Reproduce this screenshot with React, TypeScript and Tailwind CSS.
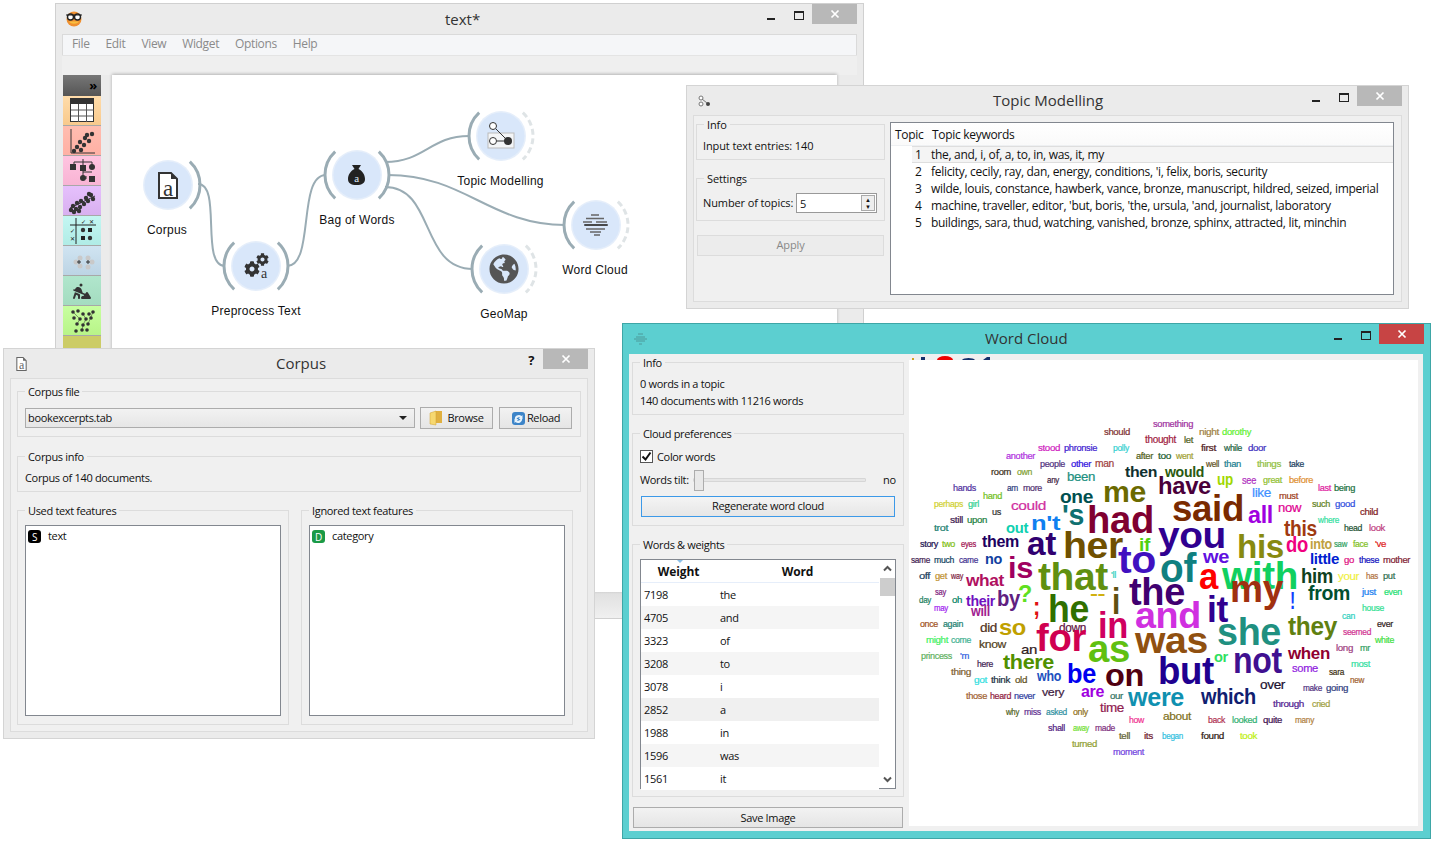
import React from "react";
import { FaCog, FaGlobeAmericas } from "react-icons/fa";
import { FaPersonDigging } from "react-icons/fa6";

type W = [string, number, number, number, number, string];
const words: W[] = [
  ["something",1153,1193,427,9,"#a030a0"],["should",1104,1130,435,9,"#803030"],["night",1199,1219,435,9,"#a08040"],["dorothy",1222,1251,435,9,"#60f030"],
  ["thought",1145,1176,443,10,"#a02040"],["let",1184,1193,443,9,"#506020"],["stood",1038,1060,451,9,"#d020c0"],["phronsie",1064,1097,451,9,"#4020d0"],["polly",1113,1129,451,9,"#30d0d0"],
  ["first",1201,1216,451,9,"#502020"],["while",1224,1242,451,9,"#206040"],["door",1248,1266,451,9,"#4030c0"],["after",1136,1153,459,9,"#506020"],["too",1158,1171,459,9,"#206030"],["went",1176,1193,459,9,"#a0a030"],
  ["another",1006,1035,459,9,"#b030e0"],["people",1040,1065,467,9,"#503080"],["other",1071,1091,467,9,"#3010e0"],["man",1095,1114,467,10,"#a04040"],["well",1206,1219,467,9,"#605020"],["than",1224,1241,467,9,"#208090"],["things",1257,1281,467,9,"#90c040"],["take",1289,1304,467,9,"#204060"],
  ["room",991,1011,475,9,"#403020"],["own",1017,1032,475,9,"#80a030"],["then",1125,1157,477,15,"#103030"],["would",1165,1204,477,14,"#2a5a10"],["any",1047,1059,483,9,"#402040"],["been",1067,1095,481,12,"#209080"],
  ["up",1217,1233,485,16,"#a0d800"],["see",1242,1256,484,10,"#b030c0"],["great",1263,1282,483,9,"#90c030"],["before",1289,1313,483,9,"#e09030"],["hands",953,976,491,9,"#5030a0"],["am",1007,1018,491,9,"#304080"],["more",1023,1042,491,9,"#503070"],["last",1318,1331,491,9,"#e020a0"],["being",1334,1355,491,9,"#207040"],
  ["hand",983,1002,499,9,"#70c020"],["have",1158,1211,494,24,"#4a003a"],["me",1103,1146,502,29,"#6b6a00"],["like",1252,1271,497,13,"#4090ff"],["must",1279,1298,499,9,"#a04020"],["one",1060,1093,503,19,"#005050"],
  ["such",1312,1330,507,9,"#608020"],["good",1335,1355,507,9,"#3050e0"],["perhaps",934,963,507,9,"#d0d030"],["girl",968,979,507,9,"#30d090"],["could",1011,1046,510,13,"#d030a0"],["now",1278,1301,512,12,"#e00090"],["child",1360,1378,515,9,"#802020"],["us",992,1001,515,9,"#303030"],
  ["said",1172,1244,521,36,"#7a2a00"],["all",1248,1273,523,24,"#a000e0"],["where",1318,1339,523,9,"#30e0a0"],["still",950,963,523,9,"#402050"],["upon",967,987,523,9,"#208040"],["'s",1062,1084,525,30,"#107070"],["n't",1031,1060,530,21,"#1080f0"],
  ["head",1344,1362,531,9,"#205030"],["look",1369,1385,531,9,"#c04080"],["trot",934,948,531,9,"#208070"],["had",1087,1154,533,38,"#800030"],["out",1006,1028,533,14,"#10d0b0"],["this",1284,1317,536,22,"#a03a10"],
  ["story",920,938,547,9,"#201050"],["two",942,955,547,9,"#80c010"],["eyes",961,976,547,9,"#a01050"],["them",982,1019,547,16,"#200060"],["saw",1334,1347,547,9,"#30a060"],["face",1353,1368,547,9,"#80c020"],["'ve",1375,1386,547,9,"#e02020"],
  ["you",1158,1226,548,37,"#300090"],["into",1310,1332,549,14,"#c0a040"],["if",1139,1150,551,18,"#50d010"],["do",1286,1308,552,22,"#f00080"],["at",1027,1056,555,34,"#300070"],["her",1063,1123,558,36,"#705000"],["his",1237,1284,558,34,"#888a10"],
  ["we",1203,1229,563,19,"#6010e0"],["little",1310,1339,564,15,"#0020d0"],["go",1344,1354,563,9,"#e01080"],["these",1359,1379,563,9,"#1010c0"],["mother",1383,1410,563,9,"#802030"],["same",911,930,563,9,"#402050"],["much",934,954,563,9,"#104060"],["came",959,978,563,9,"#403090"],["no",985,1002,564,15,"#1040a0"],
  ["to",1118,1156,573,38,"#4010c0"],["is",1008,1033,578,30,"#a00060"],["'ll",1111,1116,578,9,"#30d0c0"],["off",919,930,579,9,"#204060"],["get",935,947,579,9,"#c09030"],["way",951,963,579,9,"#802040"],["has",1366,1378,579,9,"#b07040"],["put",1383,1395,579,9,"#307050"],["your",1338,1359,580,11,"#f0f040"],
  ["of",1160,1196,582,40,"#108080"],["him",1301,1333,583,20,"#104020"],["what",966,1004,586,16,"#b01060"],["a",1199,1218,589,37,"#ff0000"],["with",1222,1298,589,38,"#10d060"],["that",1038,1108,590,38,"#609010"],
  ["say",935,946,595,9,"#802080"],["just",1362,1376,595,9,"#2080f0"],["even",1384,1402,595,9,"#20e070"],["from",1308,1350,600,20,"#005030"],["--",1090,1105,599,16,"#d0b010"],["?",1018,1032,602,24,"#60e020"],["my",1230,1283,602,38,"#a03010"],["day",919,931,603,9,"#208060"],["oh",952,962,603,9,"#008060"],
  ["the",1129,1185,605,38,"#400070"],["their",966,995,606,14,"#7010c0"],["by",997,1020,606,22,"#602080"],["!",1290,1295,609,24,"#1040ff"],["house",1362,1384,611,9,"#30e090"],["may",934,948,611,9,"#a020f0"],["i",1112,1120,614,36,"#605010"],[";",1033,1040,615,26,"#e01010"],["will",971,990,616,14,"#a02090"],
  ["can",1342,1355,619,9,"#30d0c0"],["he",1048,1089,622,38,"#307000"],["it",1207,1228,622,36,"#300090"],["once",920,938,627,9,"#a05020"],["again",943,963,627,9,"#208070"],["ever",1377,1393,627,9,"#302020"],["and",1135,1201,628,37,"#d030e0"],["did",980,997,632,12,"#503020"],["down",1059,1086,632,12,"#601040"],
  ["so",999,1026,635,22,"#c0a000"],["seemed",1343,1371,635,9,"#d03090"],["they",1288,1337,635,26,"#608010"],["in",1098,1128,638,36,"#d00060"],["might",926,948,643,9,"#40f060"],["come",951,971,643,9,"#40b090"],["white",1375,1394,643,9,"#40e040"],["she",1217,1281,645,38,"#209080"],
  ["know",979,1006,648,11,"#504020"],["for",1036,1086,651,38,"#d00050"],["long",1336,1353,651,9,"#a04080"],["mr",1360,1370,651,9,"#30a060"],["was",1135,1208,653,37,"#905010"],["an",1021,1037,654,13,"#302020"],["when",1288,1330,659,17,"#900030"],["princess",921,952,659,9,"#60b060"],["'m",960,969,659,9,"#3060e0"],
  ["as",1088,1130,662,38,"#60c010"],["or",1214,1228,662,15,"#30e060"],["here",977,993,667,9,"#402050"],["most",1351,1370,667,9,"#30e0a0"],["there",1003,1054,669,20,"#509000"],["some",1292,1318,672,11,"#9020e0"],["not",1233,1282,673,36,"#401090"],["thing",951,971,675,9,"#806030"],["sara",1329,1344,675,9,"#403010"],
  ["who",1037,1061,681,14,"#2050c0"],["got",974,987,683,9,"#30e0e0"],["think",991,1010,683,9,"#203040"],["old",1015,1027,683,9,"#605020"],["new",1350,1364,683,9,"#a06030"],["be",1067,1096,683,28,"#0000f0"],["but",1158,1214,684,38,"#200090"],["on",1105,1144,686,32,"#500010"],
  ["over",1260,1285,689,12,"#201030"],["make",1303,1322,691,9,"#503080"],["going",1326,1348,691,9,"#304080"],["very",1042,1064,696,11,"#402040"],["are",1081,1104,697,16,"#a000e0"],["those",966,987,699,9,"#a06030"],["heard",990,1011,699,9,"#902040"],["never",1014,1035,699,9,"#3040a0"],["our",1110,1123,699,9,"#307060"],
  ["which",1201,1256,704,22,"#102070"],["were",1128,1184,706,26,"#1090b0"],["through",1273,1304,707,9,"#502090"],["cried",1312,1330,707,9,"#a0a040"],["time",1100,1124,712,12,"#902050"],["why",1006,1019,715,9,"#506020"],["miss",1024,1041,715,9,"#603090"],["asked",1046,1067,715,9,"#3090a0"],["only",1073,1088,715,9,"#907020"],
  ["about",1163,1191,720,11,"#807020"],["back",1208,1225,723,9,"#b03050"],["looked",1232,1257,723,9,"#30b070"],["quite",1263,1282,723,9,"#401050"],["many",1295,1314,723,9,"#b08040"],["how",1129,1144,723,9,"#f03090"],["shall",1048,1065,731,9,"#502080"],["away",1073,1089,731,9,"#70e030"],["made",1095,1115,731,9,"#803080"],
  ["tell",1119,1130,739,9,"#606030"],["its",1144,1153,739,9,"#702030"],["began",1162,1183,739,9,"#30c0e0"],["found",1201,1224,739,9,"#302010"],["took",1240,1257,739,9,"#c0f010"],["turned",1072,1097,747,9,"#90a030"],["moment",1113,1144,755,9,"#7040e0"],
];

const ui = "font-['Open_Sans','Noto_Sans',sans-serif] text-[11px] tracking-[-0.03em] text-[#111]";
const title = "font-['Open_Sans',sans-serif] text-[15px] leading-[20px] tracking-normal text-[#333]";

function Group({ title, className, children }: { title: string; className: string; children?: React.ReactNode }) {
  return (
    <div className={`relative border border-[#dcdcdc] ${className}`}>
      <span className="absolute top-[-8px] left-[7px] bg-[#f0f0f0] px-[3px] leading-[16px]">{title}</span>
      {children}
    </div>
  );
}

function Controls({ close, max = true }: { close: string; max?: boolean }) {
  return (
    <div className="flex items-start">
      {max && (
        <>
          <div className="mt-[14px] mr-[19px] h-[2px] w-[8px] bg-[#222]" />
          <div className="mt-[7px] mr-[8px] h-[9px] w-[10px] border border-t-2 border-[#222]" />
        </>
      )}
      <div className={`flex h-[20px] w-[45px] items-center justify-center ${close}`}>
        <svg width="10" height="10" viewBox="0 0 10 10"><path d="M1.5 1.5l7 7M8.5 1.5l-7 7" stroke="#fff" strokeWidth="1.7" /></svg>
      </div>
    </div>
  );
}

function Btn({ children, className }: { children: React.ReactNode; className: string }) {
  return <div className={`flex items-center justify-center border border-[#acacac] bg-gradient-to-b from-[#f2f2f2] to-[#e5e5e5] ${className}`}>{children}</div>;
}

function Arc({ cx, cy, r = 32, a = 0, span = 47, dashed, color = "#9aacb4" }: { cx: number; cy: number; r?: number; a?: number; span?: number; dashed?: boolean; color?: string }) {
  const p = (d: number) => [cx + r * Math.cos((d * Math.PI) / 180), cy + r * Math.sin((d * Math.PI) / 180)];
  const [x0, y0] = p(a - span);
  const [x1, y1] = p(a + span);
  return <path d={`M${x0} ${y0}A${r} ${r} 0 0 1 ${x1} ${y1}`} fill="none" stroke={dashed ? "#dfe4e6" : color} strokeWidth={3} strokeDasharray={dashed ? "6 3.5" : undefined} />;
}

function Node({ cx, cy, label, lx, ly, left, right, rightDashed, children }: { cx: number; cy: number; label: string; lx: number; ly: number; left?: boolean; right?: boolean; rightDashed?: boolean; children?: React.ReactNode }) {
  return (
    <g>
      <circle cx={cx} cy={cy} r={25} fill="#cfe0f6" opacity={0.55} />
      <circle cx={cx} cy={cy} r={23.5} fill="#d9e7fa" />
      {left && <Arc cx={cx} cy={cy} a={180} />}
      {right && <Arc cx={cx} cy={cy} a={0} />}
      {rightDashed && <Arc cx={cx} cy={cy} a={0} dashed />}
      {children}
      <text x={lx} y={ly} textAnchor="middle" fontSize={12} fill="#111" letterSpacing="0.25" fontFamily="'Liberation Sans',sans-serif">{label}</text>
    </g>
  );
}

function DocIcon({ x, y, s = 1, dim }: { x: number; y: number; s?: number; dim?: boolean }) {
  const c = dim ? "#666" : "#333";
  return (
    <g transform={`translate(${x} ${y}) scale(${s})`}>
      <path d="M1 1H13L19 7V26H1Z" fill="#fff" stroke={c} strokeWidth="2" />
      <path d="M13 1V7H19Z" fill={c} />
      <text x="10" y="24" textAnchor="middle" fontSize="23" fontFamily="'Liberation Serif',serif" fill={c}>a</text>
    </g>
  );
}

function NodeCanvas() {
  return (
    <div className="relative h-[517px] flex-1 bg-white shadow-[0_-1px_3px_rgba(0,0,0,0.25)]">
      <svg className="block" width="725" height="517" viewBox="112 75 725 517">
        <g fill="none" stroke="#9aacb4" strokeWidth="2">
          <path d="M198 184C222 184 200 266 225 266" />
          <path d="M287 266C315 266 297 175 326 175" />
          <path d="M385 162C425 162 430 136 469 136" />
          <path d="M388 175C465 175 490 225 565 225" />
          <path d="M385 187C435 187 420 269 473 269" />
        </g>
        <Node cx={168} cy={185} label="Corpus" lx={167} ly={234} right>
          <DocIcon x={158} y={172} />
        </Node>
        <Node cx={256} cy={266} label="Preprocess Text" lx={256} ly={315} left right>
          <FaCog x={244} y={261} size={16} color="#333" />
          <FaCog x={256} y={253} size={13} color="#333" />
          <text x={264} y={278} textAnchor="middle" fontSize={14} fontFamily="'Liberation Serif',serif" fill="#333">a</text>
        </Node>
        <Node cx={357} cy={175} label="Bag of Words" lx={357} ly={224} left right>
          <path d="M352 165h9l-2.5 4c4 2 6.500 6 6.500 10 0 4-3 6-8.500 6s-8.500-2-8.500-6c0-4 2.500-8 6.500-10z" fill="#222" />
          <text x={356.500} y={182} textAnchor="middle" fontSize={11} fontFamily="'Liberation Serif',serif" fill="#dfe9f8">a</text>
        </Node>
        <Node cx={501} cy={136} label="Topic Modelling" lx={500.500} ly={185} left rightDashed>
          <rect x={488} y={133} width={26} height={15} fill="#f3f5f7" stroke="#bbb" />
          <circle cx={493} cy={126} r={3.500} fill="#fff" stroke="#333" />
          <circle cx={493} cy={141} r={3.500} fill="#fff" stroke="#333" />
          <circle cx={508} cy={141} r={4} fill="#333" />
          <path d="M496 129l10 10M497 141h8" stroke="#333" />
        </Node>
        <Node cx={504} cy={269} label="GeoMap" lx={504} ly={318} left rightDashed>
          <FaGlobeAmericas x={489} y={254} size={30} color="#555" />
        </Node>
        <Node cx={596} cy={225} label="Word Cloud" lx={595} ly={274} left rightDashed>
          <path d="M591 215h8M586 218.500h18M583 222h9M596 222h11M585 225h22M586 229h19M590 232h11M594 235h6" stroke="#666" strokeWidth="1.400" />
          <path d="M584 225h24" stroke="#222" strokeWidth="1.200" />
        </Node>
      </svg>
    </div>
  );
}

const Dot = ({ x, y, r = 2.2 }: { x: number; y: number; r?: number }) => <circle cx={x} cy={y} r={r} fill="#333" />;

function Dock() {
  const rows: [string, React.ReactNode][] = [
    ["from-[#ffdcaa] to-[#f8c98c]", <g><rect x="7.500" y="2.500" width="23" height="23" fill="#fff" stroke="#333" /><rect x="8" y="3" width="23" height="5" fill="#333" /><path d="M8 14h23M8 20h23M15.500 8v18M23.500 8v18" stroke="#555" /></g>],
    ["from-[#ffbdb0] to-[#ffb0a4]", <g><path d="M8 3v24h24" fill="none" stroke="#333" /><Dot x={11} y={25} /><Dot x={14} y={21} /><Dot x={18} y={24} /><Dot x={17} y={16} /><Dot x={21} y={19} /><Dot x={22} y={12} /><Dot x={26} y={15} /><Dot x={29} y={8} /><Dot x={24} y={9} /></g>],
    ["from-[#ffc4e0] to-[#f8b4d4]", <g fill="#333"><path d="M11 9V6h18v3M20 3v17M20 16h9M23 20v3" stroke="#333" fill="none" /><rect x="7" y="8" width="6" height="6" /><rect x="17" y="9" width="6" height="6" /><circle cx="29" cy="11" r="3" /><circle cx="20" cy="22" r="3" /><rect x="26" y="20" width="6" height="6" /></g>],
    ["from-[#e6c0fc] to-[#d8b0f0]", <g>{[[8,24],[10,20],[13,23],[14,17],[17,21],[18,15],[21,18],[23,12],[25,15],[28,9],[30,13],[26,8],[11,26],[16,25]].map(([x, y], i) => <Dot key={i} x={x} y={y} />)}<path d="M7 22L32 10" stroke="#333" /></g>],
    ["from-[#c4f6f2] to-[#b0ece6]", <g><path d="M7 9h26M13 2v26" stroke="#222" /><text x="18" y="8" fontSize="6" fill="#222">✓</text><text x="26" y="8" fontSize="6" fill="#222">✕</text><text x="7" y="17" fontSize="6" fill="#222">✓</text><text x="7" y="25" fontSize="6" fill="#222">✕</text><Dot x={20} y={14} /><rect x="25" y="12" width="4" height="4" fill="#222" /><rect x="18" y="20" width="4" height="4" fill="#222" /><Dot x={27} y={22} /></g>],
    ["from-[#d0e4f2] to-[#bcd4e4]", <g fill="#c9c9c9"><circle cx="17" cy="12" r="2.500" /><circle cx="13" cy="16" r="2.500" /><circle cx="17" cy="20" r="2.500" /><circle cx="25" cy="12" r="2.500" /><circle cx="29" cy="16" r="2.500" /><circle cx="25" cy="21" r="2.500" /><path d="M14 16h4M16 14v4M23 16h4M25 14v4" stroke="#333" /></g>],
    ["from-[#b0e6cc] to-[#a4dcc0]", <FaPersonDigging x={10} y={6} size={18} color="#333" />],
    ["from-[#c8ffa0] to-[#b8f488]", <g>{[[10,6],[15,5],[20,8],[26,8],[30,6],[11,12],[17,13],[23,13],[28,12],[14,18],[20,19],[25,18],[13,25],[19,24],[24,24]].map(([x, y], i) => <Dot key={i} x={x} y={y} r={1.800} />)}<path d="M10 6L17 13L14 18M20 8L23 13L20 19L19 24M30 6L25 18" stroke="#333" strokeWidth=".5" fill="none" /></g>],
  ];
  return (
    <div className="flex w-[38px] flex-col">
      <div className="flex h-[21px] items-center justify-end bg-gradient-to-b from-[#777] to-[#555] pr-[4px] text-[13px] font-bold leading-none text-black">»</div>
      {rows.map(([c, icon], i) => (
        <div key={i} className={`h-[30px] border-b border-[#a8a8a8] bg-gradient-to-b ${c}`}>
          <svg width="38" height="29" viewBox="0 0 38 29">{icon}</svg>
        </div>
      ))}
      <div className="h-[14px] bg-[#cccc66]" />
    </div>
  );
}

function MainWindow() {
  return (
    <div className={`absolute left-[55px] top-[3px] flex h-[616px] w-[809px] flex-col border border-[#d0d0d0] bg-[#ebebeb] ${ui}`}>
      <div className="relative flex h-[30px] shrink-0 items-start justify-end pr-[6px]">
        <svg className="absolute left-[9px] top-[6px]" width="18" height="18" viewBox="0 0 18 18">
          <circle cx="9" cy="9" r="7.500" fill="#f09030" />
          <path d="M4 11.500c2 3 8 3 10 0" fill="#f8c040" />
          <circle cx="5.500" cy="7" r="3" fill="#fff" stroke="#222" strokeWidth="1.400" />
          <circle cx="12.500" cy="7" r="3" fill="#fff" stroke="#222" strokeWidth="1.400" />
          <path d="M1 5h16" stroke="#222" />
        </svg>
        <span className={`absolute left-[389px] top-[5px] ${title}`}>text*</span>
        <Controls close="bg-[#b8b8b8]" />
      </div>
      <div className="mx-[6px] flex h-[21px] shrink-0 items-center gap-[16px] border border-b-0 border-[#dadada] bg-[#f5f6f8] pl-[9px] text-[12px] tracking-[-0.03em] text-[#8a8a8a]">
        {["File", "Edit", "View", "Widget", "Options", "Help"].map((m) => <span key={m} className="-translate-y-px">{m}</span>)}
      </div>
      <div className="mx-[6px] h-[20px] shrink-0 border-t border-[#e4e4e4] bg-[#efefef]" />
      <div className="mx-[7px] flex flex-1 flex-col">
        <div className="flex gap-[11px] pr-[19px]">
          <Dock />
          <NodeCanvas />
        </div>
        <div className="flex-1 bg-gradient-to-b from-[#e0e0e0] to-[#f0f0f0]" />
      </div>
    </div>
  );
}

function TopicWindow() {
  const rows = ["the, and, i, of, a, to, in, was, it, my", "felicity, cecily, ray, dan, energy, conditions, 'i, felix, boris, security", "wilde, louis, constance, hawberk, vance, bronze, manuscript, hildred, seized, imperial", "machine, traveller, editor, 'but, boris, 'the, ursula, 'and, journalist, laboratory", "buildings, sara, thud, watching, vanished, bronze, sphinx, attracted, lit, minchin"];
  return (
    <div className={`absolute left-[686px] top-[85px] flex h-[224px] w-[723px] flex-col border border-[#d4d4d4] bg-[#ebebeb] ${ui}`}>
      <div className="relative flex h-[29px] shrink-0 items-start justify-end pr-[6px]">
        <svg className="absolute left-[11px] top-[9px]" width="13" height="13" viewBox="0 0 13 13"><circle cx="3" cy="3" r="2" fill="#fff" stroke="#777" /><circle cx="3" cy="9" r="2" fill="#fff" stroke="#777" /><circle cx="10" cy="9" r="2" fill="#444" /><path d="M4 4l5 4" stroke="#777" /></svg>
        <span className={`absolute left-[306px] top-[4px] ${title}`}>Topic Modelling</span>
        <Controls close="bg-[#b8b8b8]" />
      </div>
      <div className="mx-[6px] flex h-[187px] gap-[5px] border border-[#dcdcdc] bg-[#f0f0f0] pl-[2px]">
        <div className="flex w-[189px] flex-col tracking-[-0.01em]">
          <Group title="Info" className="mt-[8px] h-[36px] pl-[6px] pt-[12px]"><div className="leading-[17px]">Input text entries: 140</div></Group>
          <Group title="Settings" className="mt-[18px] h-[43px] pl-[6px] pt-[14px]">
            <div className="flex items-center gap-[8px] leading-[17px]">
              <span className="w-[85px] -translate-y-px whitespace-nowrap">Number of topics:</span>
              <div className="flex h-[20px] w-[81px] items-center justify-between border border-[#999] bg-white pl-[3px] pr-[1px]">
                <span>5</span>
                <div className="flex h-[16px] w-[14px] flex-col items-center justify-around border border-[#aaa] bg-[#eee] text-[6px] leading-none">
                  <span>▲</span><span>▼</span>
                </div>
              </div>
            </div>
          </Group>
          <div className="ml-[1px] mt-[14px] flex h-[21px] w-[187px] items-center justify-center border border-[#dcdcdc] bg-[#ececec] text-[#888]">Apply</div>
        </div>
        <div className="mr-[7px] mt-[6px] h-[173px] flex-1 border border-[#82878f] bg-white text-[12px] tracking-[-0.025em]">
          <div className="flex h-[23px] items-center border-b border-[#eef0f2] bg-gradient-to-b from-white to-[#fafafa] pt-[2px]">
            <span className="w-[41px] pl-[4px]">Topic</span>
            <span>Topic keywords</span>
          </div>
          {rows.map((r, i) => (
            <div key={i} className="flex h-[17px] items-center leading-[17px]">
              <span className="w-[21px] shrink-0" />
              <span className={`flex h-[17px] flex-1 items-center ${i === 0 ? "border-y border-[#dedede] bg-[#f4f4f4]" : ""}`}>
                <span className="w-[19px] shrink-0 pl-[3px]">{i + 1}</span>
                <span>{r}</span>
              </span>
            </div>
          ))}
        </div>
      </div>
    </div>
  );
}

function ListBox({ icon, tone, text }: { icon: string; tone: string; text: string }) {
  return (
    <div className="mx-[7px] mt-[14px] h-[191px] border border-[#82878f] bg-white p-[2px]">
      <div className="flex items-center gap-[5px] leading-[17px]">
        <span className={`flex h-[13px] w-[13px] items-center justify-center rounded-[3px] text-[10px] leading-none text-white ${tone}`}>{icon}</span>
        <span className="pl-[2px] -translate-y-px">{text}</span>
      </div>
    </div>
  );
}

function CorpusWindow() {
  return (
    <div className={`absolute left-[3px] top-[348px] flex h-[391px] w-[592px] flex-col border border-[#d4d4d4] bg-[#ebebeb] ${ui}`}>
      <div className="relative flex h-[29px] shrink-0 items-start justify-end pr-[6px]">
        <svg className="absolute left-[12px] top-[8px]" width="11" height="14" viewBox="0 0 20 27"><DocIcon x={0} y={0} dim /></svg>
        <span className={`absolute left-[272px] top-[4px] ${title}`}>Corpus</span>
        <span className="mr-[9px] mt-[1px] text-[13px] font-bold leading-[20px]">?</span>
        <Controls close="bg-[#b8b8b8]" max={false} />
      </div>
      <div className="mx-[6px] h-[354px] border border-[#dcdcdc] bg-[#f0f0f0] px-[6px]">
        <Group title="Corpus file" className="mt-[12px] h-[46px]">
          <div className="flex items-center gap-[5px] pl-[7px] pt-[15px]">
            <div className="flex h-[20px] w-[390px] items-center justify-between border border-[#acacac] bg-gradient-to-b from-[#f2f2f2] to-[#e6e6e6] pl-[2px] pr-[7px]">
              <span>bookexcerpts.tab</span>
              <span className="h-0 w-0 border-x-[4px] border-t-[4px] border-x-transparent border-t-[#222]" />
            </div>
            <Btn className="h-[22px] w-[73px] gap-[4px]">
              <svg width="14" height="16" viewBox="0 0 14 16"><path d="M6 1h7v12H6z" fill="#e0b040" /><path d="M1 3l6-2v14l-6-1z" fill="#f6d870" stroke="#d0a030" strokeWidth=".5" /></svg>
              <span>Browse</span>
            </Btn>
            <Btn className="ml-[1px] h-[22px] w-[73px] gap-[1px]">
              <svg width="15" height="15" viewBox="0 0 15 15"><rect x="1" y="1" width="13" height="13" rx="3" fill="#3c84c8" /><path d="M4 9a4 4 0 0 1 6.500-4l1-1v4h-4l1.500-1.500A2.400 2.400 0 0 0 5.500 9zM11 7a4 4 0 0 1-6.500 4l-1 1V8h4L6 9.500A2.400 2.400 0 0 0 9.500 7z" fill="#e6f2fb" /></svg>
              <span>Reload</span>
            </Btn>
          </div>
        </Group>
        <Group title="Corpus info" className="mt-[19px] h-[36px] pl-[7px] pt-[12px]"><div className="leading-[17px]">Corpus of 140 documents.</div></Group>
        <div className="mt-[18px] flex gap-[12px]">
          <Group title="Used text features" className="h-[215px] w-[272px]"><ListBox icon="S" tone="bg-black" text="text" /></Group>
          <Group title="Ignored text features" className="h-[215px] w-[272px]"><ListBox icon="D" tone="bg-[#1a9a46]" text="category" /></Group>
        </div>
      </div>
    </div>
  );
}

function WordCloudWindow() {
  const data = [["7198", "the"], ["4705", "and"], ["3323", "of"], ["3208", "to"], ["3078", "i"], ["2852", "a"], ["1988", "in"], ["1596", "was"], ["1561", "it"]];
  return (
    <div className={`absolute left-[622px] top-[323px] flex h-[516px] w-[809px] flex-col border border-[#3ea6a6] bg-[#5ccfd0] ${ui}`}>
      <div className="relative flex h-[30px] shrink-0 items-start justify-end pr-[6px]">
        <svg className="absolute left-[11px] top-[9px]" width="13" height="12" viewBox="0 0 13 12"><path d="M4 1h5M2 4h9M0 6h13M2 8h9M5 11h3" stroke="#4d9a9a" /></svg>
        <span className={`absolute left-[362px] top-[4px] ${title}`}>Word Cloud</span>
        <Controls close="bg-[#c74444]" />
      </div>
      <div className="ml-[6px] mr-[7px] flex h-[477px] bg-[#f0f0f0]">
        <div className="flex w-[280px] shrink-0 flex-col pl-[3px] pr-[5px]">
          <Group title="Info" className="mt-[8px] h-[53px] pl-[7px] pt-[12px]">
            <div className="leading-[17px]">0 words in a topic</div>
            <div className="leading-[17px]">140 documents with 11216 words</div>
          </Group>
          <Group title="Cloud preferences" className="mt-[18px] h-[93px] px-[7px] pt-[14px]">
            <div className="flex items-center gap-[4px] leading-[17px]">
              <span className="flex h-[13px] w-[13px] items-center justify-center border border-[#555] bg-white">
                <svg width="11" height="11" viewBox="0 0 11 11"><path d="M1.500 5.500L4.500 8.500L9.500 1.500" fill="none" stroke="#111" strokeWidth="2" /></svg>
              </span>
              <span>Color words</span>
            </div>
            <div className="mt-[4px] flex h-[22px] items-center">
              <span className="w-[53px] shrink-0 whitespace-nowrap">Words tilt:</span>
              <div className="relative h-[4px] w-[173px] rounded-[1px] border border-[#d6d6d6] bg-[#e6e6e6]">
                <div className="absolute left-0 top-[-9px] h-[21px] w-[10px] border border-[#acacac] bg-[#e8e8e8]" />
              </div>
              <span className="ml-[17px]">no</span>
            </div>
            <div className="ml-[1px] mt-[5px] flex h-[21px] w-[254px] items-center justify-center border border-[#3c99e8] bg-gradient-to-b from-[#f4f4f4] to-[#e6e6e6]">Regenerate word cloud</div>
          </Group>
          <Group title="Words & weights" className="mt-[18px] h-[253px] px-[7px] pt-[14px]">
            <div className="flex h-[230px] w-[256px] border border-[#82878f] bg-white">
              <div className="flex-1">
                <div className="relative flex h-[23px] items-center border-b border-[#e6eefa] bg-white pt-[2px] text-[12px] font-bold leading-none tracking-[-0.01em]">
                  <span className="absolute left-[36px] top-0 h-0 w-0 border-x-[3px] border-t-[3px] border-x-transparent border-t-[#8cc0e8]" />
                  <span className="w-[75px] text-center leading-[20px]">Weight</span>
                  <span className="flex-1 text-center">Word</span>
                </div>
                {data.map(([n, t], i) => (
                  <div key={n} className={`flex h-[23px] items-center pt-[2px] ${i === 5 ? "bg-[#f0f0f0]" : i % 2 === 1 ? "bg-[#f5f5f5]" : "bg-white"}`}>
                    <span className="w-[79px] pl-[3px]">{n}</span>
                    <span>{t}</span>
                  </div>
                ))}
              </div>
              <div className="flex w-[16px] flex-col items-center bg-white">
                <svg className="mt-[5px]" width="9" height="7" viewBox="0 0 9 7"><path d="M1 5.500L4.500 2L8 5.500" fill="none" stroke="#555" strokeWidth="2" /></svg>
                <div className="mt-[6px] h-[18px] w-[15px] bg-[#cdcdcd]" />
                <div className="flex-1" />
                <svg className="mb-[5px]" width="9" height="7" viewBox="0 0 9 7"><path d="M1 1.500L4.500 5L8 1.500" fill="none" stroke="#555" strokeWidth="2" /></svg>
              </div>
            </div>
          </Group>
          <Btn className="ml-[1px] mt-[10px] h-[21px] w-[270px] pt-[2px]">Save Image</Btn>
        </div>
        <div className="mt-[6px] h-[466px] w-[509px] shrink-0 bg-white">
          <svg className="block overflow-visible" width="509" height="466" viewBox="909 360 509 466" fontFamily="'Liberation Sans',Arial,sans-serif">
            <rect x="912" y="358" width="2" height="2" fill="#d0a020" />
            <path d="M921 360v-3h4v3zM962 360a7 3 0 0 1 13 0zM983 360l4-3h3v3z" fill="#14306a" />
            <path d="M937 360a8 4 0 0 1 16 0z" fill="#f00000" />
            {words.map(([t, x1, x2, y, s, c]) => {
              const bold = s >= 14;
              return (
                <text key={t} x={x1} y={y} fontSize={s} fill={c} fontWeight={bold ? 700 : 400} textLength={x2 - x1} lengthAdjust="spacingAndGlyphs" stroke={bold ? undefined : c} strokeWidth={bold ? undefined : 0.2}>{t}</text>
              );
            })}
          </svg>
        </div>
      </div>
    </div>
  );
}

export default function App() {
  return (
    <div className="relative h-[842px] w-[1434px] overflow-hidden bg-white">
      <MainWindow />
      <TopicWindow />
      <CorpusWindow />
      <WordCloudWindow />
    </div>
  );
}
